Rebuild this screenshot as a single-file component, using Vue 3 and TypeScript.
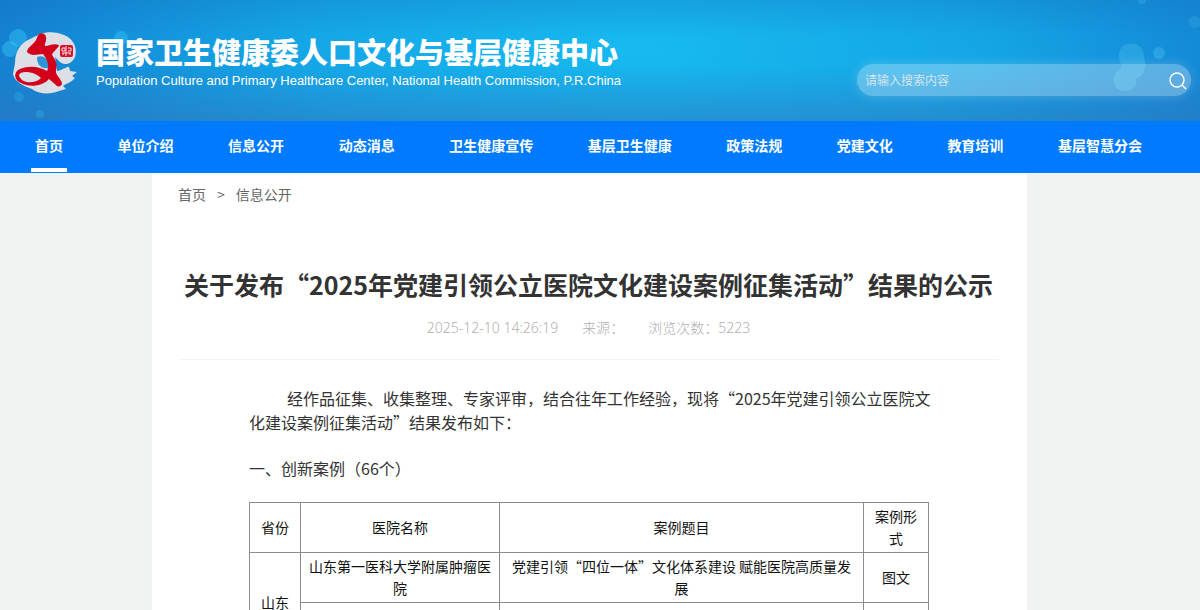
<script setup lang="ts">
interface NavItem {
  label: string
  active?: boolean
}

const navItems: NavItem[] = [
  { label: '首页', active: true },
  { label: '单位介绍' },
  { label: '信息公开' },
  { label: '动态消息' },
  { label: '卫生健康宣传' },
  { label: '基层卫生健康' },
  { label: '政策法规' },
  { label: '党建文化' },
  { label: '教育培训' },
  { label: '基层智慧分会' },
]
</script>

<template>
  <div class="page">
    <header class="banner">
      <svg class="bokeh" viewBox="0 0 1200 121" preserveAspectRatio="none" aria-hidden="true">
        <g fill="#2fbdf2" fill-opacity="0.5">
          <circle cx="18" cy="38" r="9" />
          <circle cx="10" cy="49" r="8" />
          <circle cx="121" cy="38" r="7" />
          <circle cx="19" cy="97" r="5" fill-opacity="0.3" />
          <circle cx="40" cy="114" r="4" fill-opacity="0.3" />
        </g>
        <path
          d="M1119 56C1119 47 1125 43 1132 44C1139 43 1144 49 1144 57C1147 68 1144 76 1136 79C1138 86 1132 91 1125 91C1116 91 1112 84 1114 77C1115 71 1120 69 1122 66C1120 62 1119 60 1119 56Z"
          fill="#3bb4ea"
          fill-opacity="0.5"
        />
        <g fill="#45b8ee" fill-opacity="0.45">
          <circle cx="1159" cy="53" r="6" />
          <circle cx="1195" cy="22" r="6" fill-opacity="0.25" />
          <circle cx="1142" cy="0" r="4" fill-opacity="0.35" />
        </g>
      </svg>
      <a class="brand" href="#">
        <svg class="emblem" viewBox="0 0 70 70" aria-hidden="true">
          <path
            d="M5 37C5 26 10 17 20 13L30 8C38 5 48 6 54 9C63 12 68 22 65 31C62 38 55 40 50 36L45 31L47 45C51 45 53 42 56 42C58 39 60 42 60 45L67 46L62 50L65 52C62 56 57 57 53 60L56 63L49 65C40 69 28 68 22 63C13 60 4 55 3 48Z"
            fill="#dddfe7"
          />
          <path d="M27 31C33 28 39 33 40 42C33 43 27 41 27 31Z" fill="#2d94d8" />
          <path
            d="M17 26C17 21 25 18 27 12C28 6 35 6 36 11C37 15 34 18 35 20C40 20 43 17 49 19C48 23 43 25 42 29C45 33 48 38 46 44C45 49 50 51 52 57C52 60 49 61 47 60L39 53C33 60 20 62 11 57C4 54 3 46 10 43C20 39 30 41 37 45C40 40 37 33 33 28C27 28 22 31 17 26ZM31 52C25 45 10 44 9 49C10 57 24 59 31 52Z"
            fill="#d3001c"
            fill-rule="evenodd"
          />
          <rect x="50" y="19" width="13" height="12" rx="2" fill="#d3112c" />
          <path
            d="M52 22H55V25H52ZM58 22H61V25H58M56 20V30M52 27H61M53 29V27M60 29V27"
            fill="none"
            stroke="#f4dfe4"
          />
        </svg>
        <span class="brand-text">
          <span class="brand-name">国家卫生健康委人口文化与基层健康中心</span>
          <span class="brand-sub">Population Culture and Primary Healthcare Center, National Health Commission, P.R.China</span>
        </span>
      </a>
      <form class="search" @submit.prevent>
        <input type="search" placeholder="请输入搜索内容" aria-label="请输入搜索内容" />
        <button type="submit" aria-label="搜索">
          <svg viewBox="0 0 20 20" fill="none" stroke="#fff" stroke-width="1.4" aria-hidden="true">
            <circle cx="9" cy="10" r="7" />
            <path d="M14 15L18 19" />
          </svg>
        </button>
      </form>
    </header>

    <nav class="nav">
      <a v-for="item in navItems" :key="item.label" href="#" :class="{ active: item.active }">{{ item.label }}</a>
    </nav>

    <main class="main">
      <div class="card">
        <div class="crumbs">
          <a href="#">首页</a><span class="sep">&gt;</span><a href="#">信息公开</a>
        </div>
        <h1>关于发布“2025年党建引领公立医院文化建设案例征集活动”结果的公示</h1>
        <div class="meta">
          <span>2025-12-10 14:26:19</span>
          <span>来源：</span>
          <span>浏览次数：5223</span>
        </div>
        <article class="article">
          <p class="lead">经作品征集、收集整理、专家评审，结合往年工作经验，现将“2025年党建引领公立医院文化建设案例征集活动”结果发布如下：</p>
          <p>一、创新案例（66个）</p>
          <table>
            <colgroup>
              <col class="c-province" />
              <col class="c-hospital" />
              <col class="c-title" />
              <col class="c-form" />
            </colgroup>
            <thead>
              <tr>
                <th scope="col">省份</th>
                <th scope="col">医院名称</th>
                <th scope="col">案例题目</th>
                <th scope="col">案例形式</th>
              </tr>
            </thead>
            <tbody>
              <tr>
                <td rowspan="2">山东</td>
                <td>山东第一医科大学附属肿瘤医院</td>
                <td>党建引领“四位一体”文化体系建设 赋能医院高质量发展</td>
                <td>图文</td>
              </tr>
              <tr>
                <td></td>
                <td></td>
                <td></td>
              </tr>
            </tbody>
          </table>
        </article>
      </div>
    </main>
  </div>
</template>

<style>
body {
  margin: 0;
  background: #f1f2f2;
}
</style>

<style scoped>
.page {
  height: 100vh;
  overflow: hidden;
  font-family: "Noto Sans CJK SC", "Noto Sans", sans-serif;
  font-size: 14px;
  color: #333;
}
a {
  color: inherit;
  text-decoration: none;
}
.banner {
  position: relative;
  display: flex;
  align-items: center;
  justify-content: space-between;
  height: 121px;
  background:
    linear-gradient(180deg, rgba(20, 110, 190, 0.25) 0, rgba(20, 110, 190, 0) 30%, rgba(45, 120, 190, 0) 55%, rgba(50, 120, 190, 0.5) 100%),
    radial-gradient(ellipse 700px 240px at 53% 40%, #17baf0 0, #14a5e6 50%, #1479cc 100%);
}
.bokeh {
  position: absolute;
  inset: 0;
  width: 100%;
  height: 100%;
}
.brand {
  position: relative;
  display: flex;
  align-items: center;
  gap: 16px;
  padding-left: 10px;
  color: #fff;
}
.emblem {
  width: 70px;
  height: 70px;
}
.brand-text {
  display: flex;
  flex-direction: column;
  gap: 1px;
  padding-top: 3px;
}
.brand-name {
  font-size: 29px;
  line-height: 36px;
  font-weight: 900;
  white-space: nowrap;
}
.brand-sub {
  font-family: "Liberation Sans", Arial, sans-serif;
  font-size: 13px;
  line-height: 22px;
  white-space: nowrap;
}
.search {
  position: relative;
  display: flex;
  align-items: center;
  width: 334px;
  height: 32px;
  margin: 38px 9px 0 0;
  border-radius: 16px;
  background: rgba(255, 255, 255, 0.3);
  box-shadow: 0 0 12px rgba(255, 255, 255, 0.2);
}
.search input {
  flex: 1;
  min-width: 0;
  padding: 0 8px;
  border: 0;
  outline: 0;
  background: none;
  color: #fff;
  font: inherit;
  font-size: 12px;
}
.search input::placeholder {
  color: #d5e4ef;
  opacity: 1;
}
.search button {
  display: flex;
  padding: 0 3px 0 0;
  border: 0;
  background: none;
}
.search svg {
  width: 20px;
  height: 20px;
}
.nav {
  display: flex;
  justify-content: space-between;
  padding: 0 58px 1px 35px;
  background: #007bff;
  color: #fff;
  font-weight: 700;
  line-height: 49px;
}
.nav a {
  position: relative;
  padding-bottom: 2px;
  white-space: nowrap;
}
.nav .active::after {
  content: "";
  position: absolute;
  left: -4px;
  right: -4px;
  bottom: 0;
  height: 4px;
  background: #fff;
}
.main {
  padding-right: 21px;
}
.card {
  box-sizing: border-box;
  max-width: 875px;
  min-height: 438px;
  margin: 0 auto;
  padding: 10px 28px 0 26px;
  background: #fff;
}
.crumbs {
  display: flex;
  gap: 11px;
  color: #666;
  line-height: 22px;
}
h1 {
  margin: 61px 0 0;
  font-size: 25px;
  line-height: 36px;
  text-align: center;
  white-space: nowrap;
}
.meta {
  display: flex;
  justify-content: center;
  gap: 24px;
  padding: 14px 0 19px;
  border-bottom: 1px solid #f4f4f4;
  color: #b0b0b0;
  font-family: "Noto Sans", "Noto Sans CJK SC", sans-serif;
  font-weight: 300;
  line-height: 24px;
}
.article {
  max-width: 688px;
  margin: 26px 62px 0 71px;
}
.article p {
  margin: 0 0 22px;
  font-size: 16px;
  line-height: 24px;
}
.article .lead {
  text-indent: 38px;
}
table {
  width: 680px;
  border-collapse: collapse;
  table-layout: fixed;
  color: #111;
  line-height: 22px;
}
.c-province {
  width: 51px;
}
.c-hospital {
  width: 199px;
}
.c-form {
  width: 65px;
}
th,
td {
  height: 44px;
  padding: 2px 6px 3px;
  border: 1px solid #8d8d8d;
  font-weight: 400;
  text-align: center;
}
</style>
